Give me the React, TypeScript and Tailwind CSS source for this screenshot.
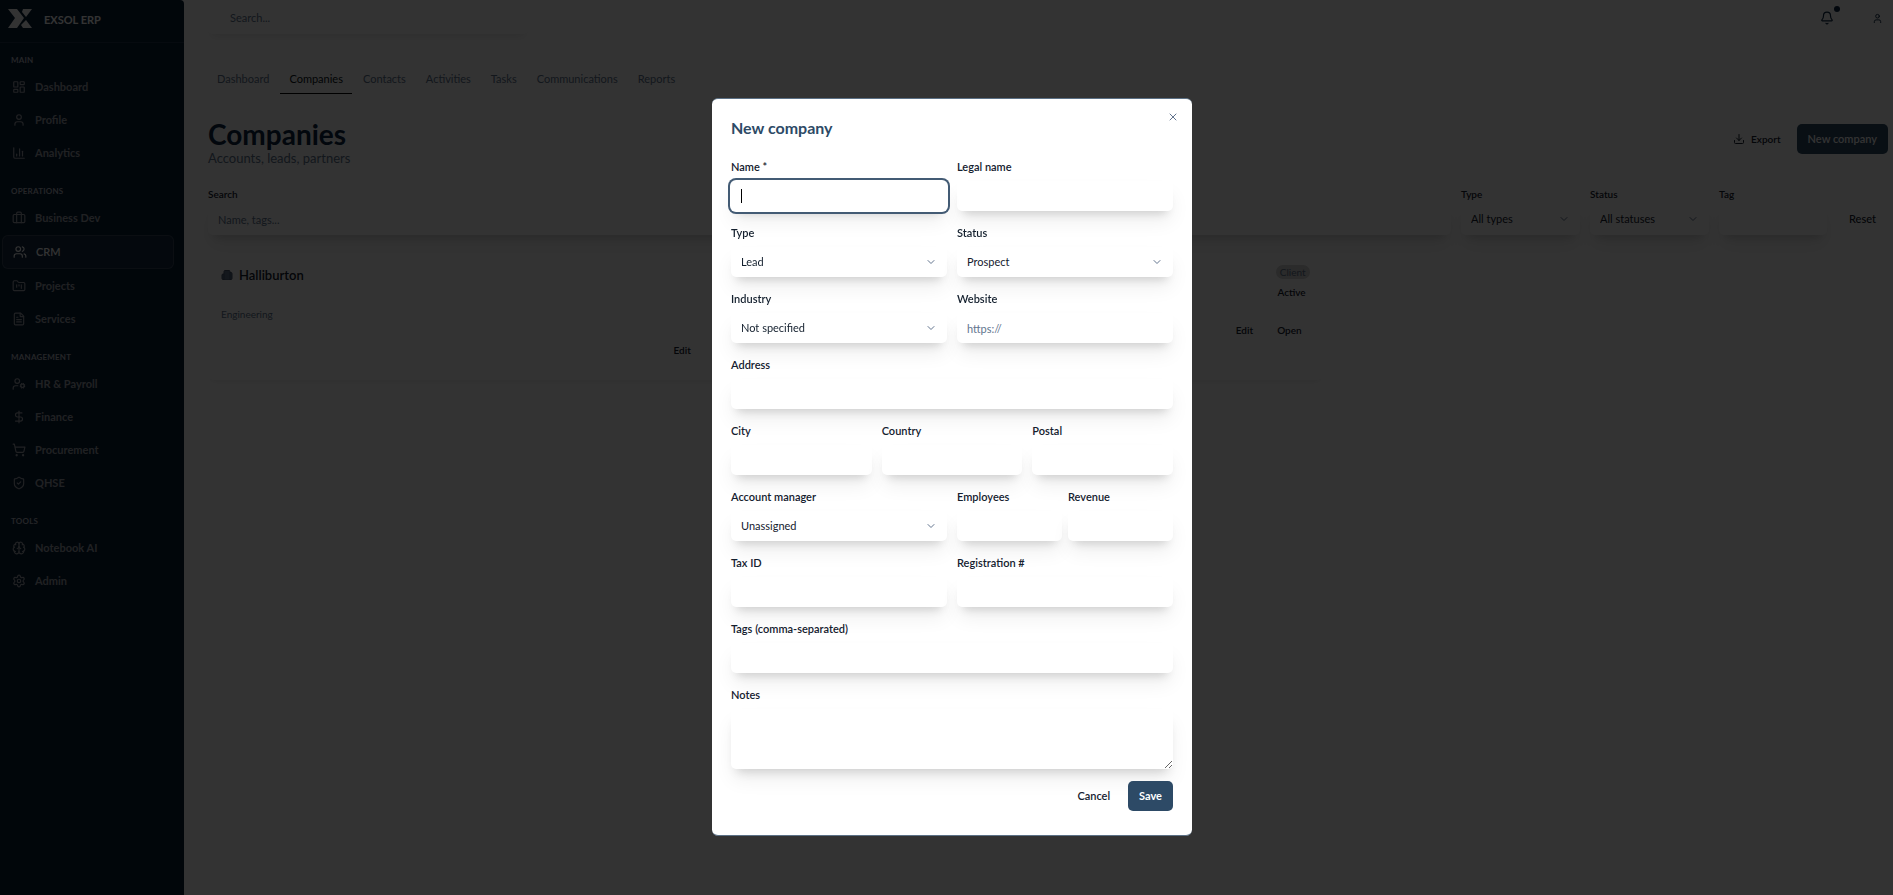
import { Bell, Brain, Briefcase, Building2, ChartColumn, ChevronDown, DollarSign, Download, FileText, FolderKanban, LayoutDashboard, Settings, ShieldCheck, ShoppingCart, User, UserCog, Users, X } from 'lucide-react';
import type { LucideIcon } from 'lucide-react';
import type { ReactNode } from 'react';

type NavItem = { label: string; icon: LucideIcon; active?: boolean };

const sections: { title: string; items: NavItem[] }[] = [
  {
    title: 'Main',
    items: [
      { label: 'Dashboard', icon: LayoutDashboard },
      { label: 'Profile', icon: User },
      { label: 'Analytics', icon: ChartColumn },
    ],
  },
  {
    title: 'Operations',
    items: [
      { label: 'Business Dev', icon: Briefcase },
      { label: 'CRM', icon: Users, active: true },
      { label: 'Projects', icon: FolderKanban },
      { label: 'Services', icon: FileText },
    ],
  },
  {
    title: 'Management',
    items: [
      { label: 'HR & Payroll', icon: UserCog },
      { label: 'Finance', icon: DollarSign },
      { label: 'Procurement', icon: ShoppingCart },
      { label: 'QHSE', icon: ShieldCheck },
    ],
  },
  {
    title: 'Tools',
    items: [
      { label: 'Notebook AI', icon: Brain },
      { label: 'Admin', icon: Settings },
    ],
  },
];

const tabs = ['Dashboard', 'Companies', 'Contacts', 'Activities', 'Tasks', 'Communications', 'Reports'];

const control =
  'block w-full rounded-[5px] bg-white px-2.5 text-[11px] text-[#14202e] placeholder:text-slate-500 shadow-[0_12px_20px_-2px_rgba(0,0,0,0.07),0_8px_10px_-6px_rgba(0,0,0,0.16)] outline-none';

function Select({ id, options, height = 'h-[30px]' }: { id: string; options: string[]; height?: string }) {
  return (
    <div className="relative flex items-center">
      <select id={id} className={`${control} ${height} appearance-none pr-8`}>
        {options.map((o) => (
          <option key={o}>{o}</option>
        ))}
      </select>
      <ChevronDown size={12} className="pointer-events-none absolute right-2.5 text-slate-500" />
    </div>
  );
}

function Field({ id, label, className = '', children }: { id: string; label: string; className?: string; children?: ReactNode }) {
  return (
    <div className={`flex min-w-0 flex-col gap-1.5 ${className}`}>
      <label htmlFor={id} className="relative z-10 text-[11px] leading-4 font-semibold text-[#14202e]">
        {label}
      </label>
      {children ?? <input id={id} type="text" className={`${control} h-[30px]`} />}
    </div>
  );
}

function Sidebar() {
  return (
    <aside className="w-46 shrink-0 rounded-tr-sm bg-[#081e36]">
      <div className="flex h-[43px] items-start gap-3 border-b border-white/10 px-2 pt-2">
        <svg width="24" height="22" viewBox="0 0 24 22" className="text-white" fill="currentColor">
          <path d="M0 1h9l7 9-7 10H0l7-10z" />
          <path d="M15 1h9l-6 8-4-5z" />
          <path d="M18 12l6 8h-9l-2-3z" />
        </svg>
        <span className="text-[11px] leading-[23px] font-bold text-white">EXSOL ERP</span>
      </div>
      <nav className="flex flex-col gap-3.5 pl-0.5 pr-2.5 pt-[9px]">
        {sections.map((s) => (
          <div key={s.title}>
            <h2 className="mb-[3px] pl-[9px] text-[8px] leading-4 font-bold tracking-wide text-[#b4bac2] uppercase">{s.title}</h2>
            <ul className="flex flex-col gap-px">
              {s.items.map(({ label, icon: Icon, active }) => (
                <li key={label}>
                  <a
                    href="#"
                    className={
                      active
                        ? 'flex h-[34px] items-center gap-[9px] rounded-md border border-white/15 bg-white/5 px-2.5 text-[11px] font-semibold text-white'
                        : 'flex h-8 items-center gap-[9px] px-2.5 text-[11px] font-bold text-[#a0a5ad]'
                    }
                  >
                    <Icon size={14} strokeWidth={2} />
                    {label}
                  </a>
                </li>
              ))}
            </ul>
          </div>
        ))}
      </nav>
    </aside>
  );
}

function Topbar() {
  return (
    <header className="flex h-[35px] items-start justify-between">
      <input
        type="search"
        aria-label="Search"
        placeholder="Search..."
        className="h-[34px] w-80 rounded-[5px] bg-white px-[22px] text-[11px] shadow-[0_6px_8px_-4px_rgba(0,0,0,0.1)] outline-none placeholder:text-slate-500"
      />
      <div className="flex items-center gap-9 pt-[9px] pr-[5px] text-[#0a2540]">
        <button type="button" aria-label="Notifications" className="relative p-0.5">
          <Bell size={14} />
          <span className="absolute -top-[3px] -right-1 h-1.5 w-1.5 rounded-full bg-[#0a2540]" />
        </button>
        <button type="button" aria-label="Account">
          <User size={11} />
        </button>
      </div>
    </header>
  );
}

function Filters() {
  const label = 'text-[10px] leading-4 font-semibold text-[#14202e]';
  return (
    <form className="mt-5 grid grid-cols-[1fr_119px_119px_108px_auto] items-end gap-2.5">
      <div className="flex flex-col gap-px">
        <label htmlFor="q" className={label}>Search</label>
        <input id="q" type="text" placeholder="Name, tags..." className={`${control} h-8`} />
      </div>
      <div className="flex flex-col gap-px">
        <label htmlFor="f-type" className={label}>Type</label>
        <Select id="f-type" options={['All types']} height="h-8" />
      </div>
      <div className="flex flex-col gap-px">
        <label htmlFor="f-status" className={label}>Status</label>
        <Select id="f-status" options={['All statuses']} height="h-8" />
      </div>
      <div className="flex flex-col gap-px">
        <label htmlFor="f-tag" className={label}>Tag</label>
        <input id="f-tag" type="text" className={`${control} h-8`} />
      </div>
      <button type="button" className="h-8 px-3 text-[11px] font-medium text-[#14202e]">Reset</button>
    </form>
  );
}

function CompanyCard() {
  return (
    <div className="mt-5 grid grid-cols-3 gap-4">
      <article className="col-span-2 flex justify-between rounded-md px-[13px] pt-2.5 pb-5 text-[10px] font-semibold text-[#14202e] shadow-[0_4px_6px_-4px_rgba(0,0,0,0.12)]">
        <div className="w-1/2">
          <h2 className="flex items-center gap-1.5 text-[13px] leading-5">
            <Building2 size={12} className="fill-slate-500 text-slate-600" />
            Halliburton
          </h2>
          <p className="mt-[19px] leading-5 font-normal text-slate-500">Engineering</p>
          <div className="mt-4 flex justify-end gap-6 pr-[26px] leading-5">
            <button type="button">Edit</button>
            <button type="button">Open</button>
          </div>
        </div>
        <div className="flex flex-col items-end">
          <span className="rounded-full bg-neutral-300 px-1 leading-[14px] font-normal text-slate-500">Client</span>
          <span className="mt-[3px] pr-1 leading-5">Active</span>
          <div className="mt-[18px] flex gap-6 pr-2 leading-5">
            <button type="button">Edit</button>
            <button type="button">Open</button>
          </div>
        </div>
      </article>
    </div>
  );
}

function NewCompanyDialog() {
  return (
    <div className="fixed inset-0 flex items-start justify-center bg-black/80 pt-[98px] pl-[11px]">
      <div role="dialog" aria-labelledby="dialog-title" className="relative w-[480px] rounded-md border-y border-[#5b7085] bg-white px-[19px] pt-[19px] pb-6">
        <h2 id="dialog-title" className="text-base leading-5 font-bold text-[#2d4a66]">New company</h2>
        <button type="button" aria-label="Close" className="absolute top-2.5 right-[11px] p-0.5 text-slate-500">
          <X size={12} />
        </button>

        <form className="mt-[21px]">
          <div className="grid grid-cols-2 gap-x-2.5 gap-y-3.5">
            <Field id="name" label="Name *">
              <div className="relative flex items-center">
                <input id="name" type="text" autoFocus className={`${control} h-[30px] caret-transparent ring-2 ring-[#435b74] ring-offset-1`} />
                <span className="pointer-events-none absolute left-2.5 h-3.5 w-px bg-black" />
              </div>
            </Field>
            <Field id="legal" label="Legal name" />
            <Field id="type" label="Type">
              <Select id="type" options={['Lead', 'Client', 'Partner']} />
            </Field>
            <Field id="status" label="Status">
              <Select id="status" options={['Prospect', 'Active', 'Inactive']} />
            </Field>
            <Field id="industry" label="Industry">
              <Select id="industry" options={['Not specified']} />
            </Field>
            <Field id="website" label="Website">
              <input id="website" type="url" placeholder="https://" className={`${control} h-[30px]`} />
            </Field>
            <Field id="address" label="Address" className="col-span-2" />
            <div className="col-span-2 grid grid-cols-3 gap-2.5">
              <Field id="city" label="City" />
              <Field id="country" label="Country" />
              <Field id="postal" label="Postal" />
            </div>
            <Field id="manager" label="Account manager">
              <Select id="manager" options={['Unassigned']} />
            </Field>
            <div className="grid grid-cols-2 gap-1.5">
              <Field id="employees" label="Employees" />
              <Field id="revenue" label="Revenue" />
            </div>
            <Field id="tax" label="Tax ID" />
            <Field id="registration" label="Registration #" />
            <Field id="tags" label="Tags (comma-separated)" className="col-span-2" />
            <Field id="notes" label="Notes" className="col-span-2">
              <textarea id="notes" className={`${control} h-[60px] resize-y py-2`} />
            </Field>
          </div>
          <div className="mt-3 flex justify-end gap-1.5">
            <button type="button" className="h-[30px] px-3 text-[11px] font-semibold text-[#14202e]">Cancel</button>
            <button type="submit" className="relative h-[30px] rounded-[5px] bg-[#2d4a66] px-[11px] text-[11px] font-bold text-white">Save</button>
          </div>
        </form>
      </div>
    </div>
  );
}

export default function App() {
  return (
    <div className="flex min-h-screen bg-white font-['Lato','Noto_Sans',sans-serif]">
      <Sidebar />
      <main className="min-w-0 flex-1 pr-[5px] pl-6">
        <Topbar />
        <nav className="mt-[33px] flex gap-0.5 text-[11px] text-slate-500">
          {tabs.map((t) => (
            <a
              key={t}
              href="#"
              className={t === 'Companies' ? 'border-b border-black px-[9px] pb-[3px] leading-[22px] text-[#0a1420]' : 'px-[9px] pb-[3px] leading-[22px]'}
            >
              {t}
            </a>
          ))}
        </nav>
        <div className="mt-6 flex items-start justify-between">
          <div>
            <h1 className="text-[28px] leading-8 font-bold text-[#0a2540]">Companies</h1>
            <p className="text-[13px] leading-4 text-slate-500">Accounts, leads, partners</p>
          </div>
          <div className="flex items-center gap-1 pt-1.5">
            <button type="button" className="flex h-[30px] items-center gap-1.5 px-3 text-[10px] font-semibold text-[#14202e]">
              <Download size={12} />
              Export
            </button>
            <button type="button" className="h-[30px] rounded-[5px] bg-[#2d4a66] px-[11px] text-[11px] font-semibold text-white">
              New company
            </button>
          </div>
        </div>
        <Filters />
        <CompanyCard />
      </main>
      <NewCompanyDialog />
    </div>
  );
}
